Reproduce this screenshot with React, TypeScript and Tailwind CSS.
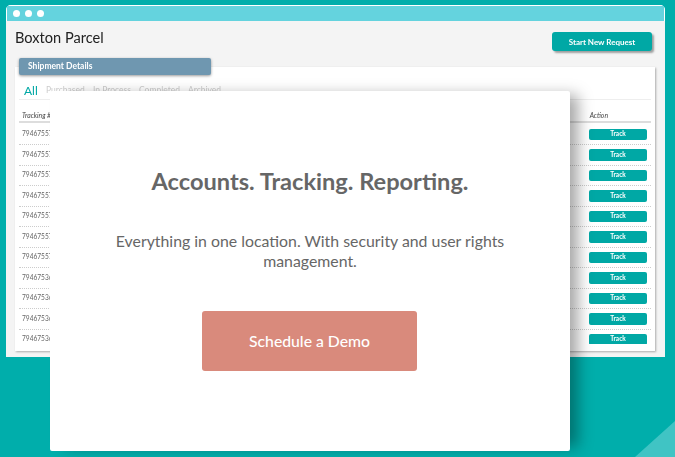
const rows = [
  "79467557", "79467557", "79467557", "79467557", "79467557", "79467557",
  "79467557", "79467536", "79467536", "79467536", "79467536",
];

function ShipmentRow({ id }: { id: string }) {
  return (
    <div className="flex h-[20.5px] shrink-0 items-center justify-between border-b border-dotted border-[#cccccc] pl-[3px] pr-[4px]">
      <span className="text-[6.6px] text-[#666]">{id}</span>
      <button className="flex h-[11.5px] w-[58px] items-center justify-center rounded-[2px] bg-[#00a8a5] text-[6.5px] font-bold text-white">
        Track
      </button>
    </div>
  );
}

export default function App() {
  return (
    <div className="relative h-[457px] w-[675px] overflow-hidden bg-[#00aeab] pl-[6px] pt-[5px] font-['Lato','Open_Sans',sans-serif]">
      {/* browser window */}
      <div className="flex h-[352px] w-[659px] flex-col overflow-hidden rounded-t-[5px] bg-[#f4f4f4] blur-[0.3px]">
        <div className="flex h-[16px] shrink-0 items-center gap-[5px] border-l border-r border-t border-white bg-[#64d3de] pl-[6px]">
          <span className="size-[7px] rounded-full bg-white" />
          <span className="size-[7px] rounded-full bg-white" />
          <span className="size-[7px] rounded-full bg-white" />
        </div>

        <div className="flex h-[46px] shrink-0 items-start justify-between pl-[9px] pr-[13px]">
          <h1 className="mt-[7px] text-[14.6px] leading-[20px] text-[#222]">Boxton Parcel</h1>
          <button className="mt-[11px] flex h-[19px] w-[100px] items-center justify-center rounded-[3px] bg-[#00a8a5] text-[8px] font-bold text-white shadow-[2px_2px_2px_rgba(0,0,0,0.35)]">
            Start New Request
          </button>
        </div>

        {/* shipment card */}
        <div className="relative ml-[9px] flex h-[284px] w-[640px] flex-col bg-white px-[4px] shadow-[1px_1px_2px_rgba(0,0,0,0.3)]">
          <div className="absolute -top-[9px] left-[4px] flex h-[17px] w-[192px] items-center rounded-[2px] bg-[#6f97b0] pl-[9px] text-[8.5px] font-bold text-white shadow-[0_1px_3px_rgba(0,0,0,0.4)]">
            Shipment Details
          </div>

          <div className="mt-[15px] flex h-[18px] shrink-0 items-center border-b border-[#eeeeee] pl-[5px]">
            <span className="w-[22px] text-[12px] text-[#00a8a5]">All</span>
            <span className="w-[47px] text-[8.5px] text-[#cccccc]">Purchased</span>
            <span className="w-[46px] text-[8.5px] text-[#cccccc]">In Process</span>
            <span className="w-[49px] text-[8.5px] text-[#cccccc]">Completed</span>
            <span className="text-[8.5px] text-[#cccccc]">Archived</span>
          </div>

          <div className="flex h-[23px] shrink-0 items-center justify-between border-b-2 border-[#dddddd] pl-[3px] pr-[43px] pt-[10px] text-[6.8px] italic text-[#444]">
            <span>Tracking #</span>
            <span>Action</span>
          </div>

          <div className="flex h-[221px] flex-col overflow-hidden pt-[1.5px]">
            {rows.map((id, i) => (
              <ShipmentRow key={i} id={id} />
            ))}
          </div>
        </div>
      </div>

      {/* corner triangle */}
      <svg className="absolute bottom-0 right-0" width="40" height="36" viewBox="0 0 40 36">
        <polygon points="40,0 40,36 0,36" fill="#40c4c4" />
      </svg>

      {/* demo modal */}
      <div className="absolute left-[50px] top-[91px] flex h-[360px] w-[520px] flex-col items-center rounded-[2px] bg-white shadow-[12px_0_14px_-4px_rgba(0,0,0,0.35)]">
        <h2 className="mt-[72px] text-[23.6px] font-bold leading-[36px] text-[#666666]">
          Accounts. Tracking. Reporting.
        </h2>
        <p className="mt-[32px] w-[420px] text-center text-[15.85px] leading-[20px] text-[#666666]">
          Everything in one location. With security and user rights management.
        </p>
        <button className="ml-[152px] mt-[40px] flex h-[60px] w-[215px] items-center justify-center self-start rounded-[3px] bg-[#d98a7c] text-[15.75px] font-medium text-white">
          Schedule a Demo
        </button>
      </div>
    </div>
  );
}
